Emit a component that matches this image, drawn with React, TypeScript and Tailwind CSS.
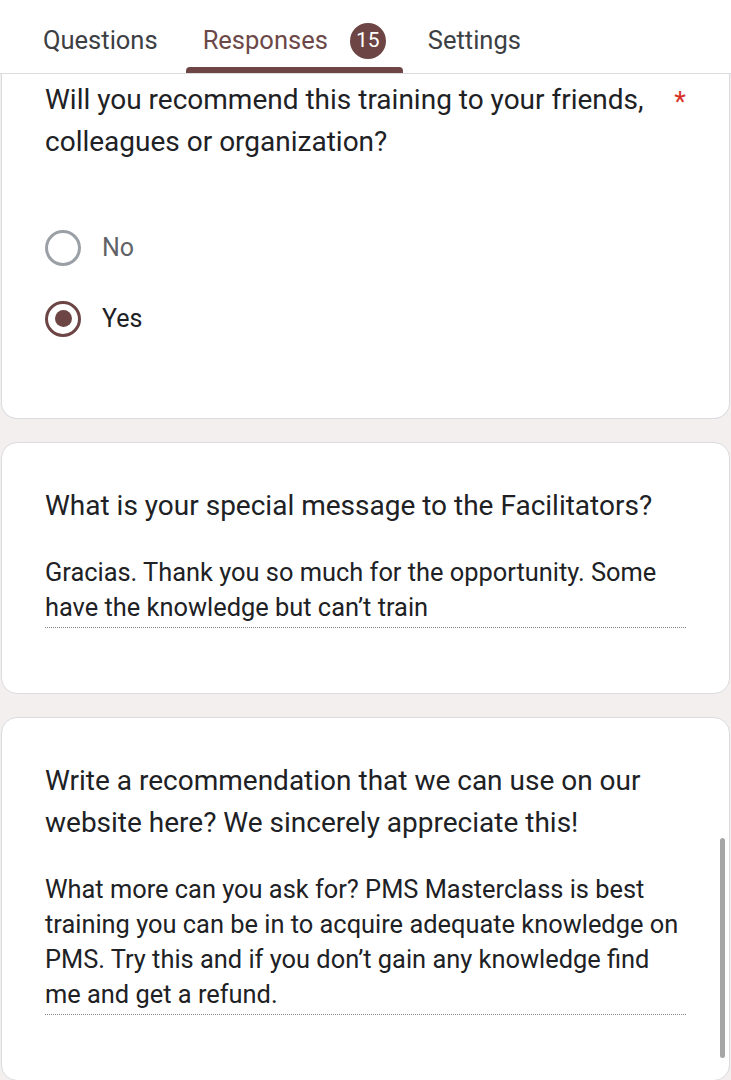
import { ReactNode } from 'react';

const font = { fontFamily: 'Roboto, "Noto Sans", sans-serif' };

function Radio({ checked, label }: { checked?: boolean; label: string }) {
  return (
    <div className="flex h-[71px] items-center gap-[21px]">
      <span
        className={`flex h-[36px] w-[36px] items-center justify-center rounded-full border-[3px] ${
          checked ? 'border-[#6d4545]' : 'border-[#9aa0a6]'
        }`}
      >
        {checked && <span className="h-[17px] w-[17px] rounded-full bg-[#6d4545]" />}
      </span>
      <span className={`text-[25px] ${checked ? 'text-[#202124]' : 'text-[#5f6368]'}`}>{label}</span>
    </div>
  );
}

function Card({ className, children }: { className?: string; children: ReactNode }) {
  return (
    <div
      className={`mx-[1px] rounded-[16px] border border-[#dadce0] bg-white pr-[43px] pl-[43px] ${className ?? ''}`}
    >
      {children}
    </div>
  );
}

function Answer({ children }: { children: ReactNode }) {
  return (
    <div className="mt-[28px]">
      <p className="text-[25.4px] leading-[35px] text-[#202124]">{children}</p>
      <div className="mt-[2px] border-b border-dotted border-[#80868b]" />
    </div>
  );
}

export default function App() {
  return (
    <div className="relative h-[1080px] w-[731px] overflow-hidden bg-[#f4efef]" style={font}>
      <div className="flex h-[74px] items-end border-b border-[#dadce0] bg-white pl-[25px] text-[25.5px]">
        <div className="flex h-full items-center pt-[8px] pr-[28px] pl-[18px] text-[#3c4043]">Questions</div>
        <div className="relative flex h-full items-center gap-[22px] px-[17px] pt-[8px] text-[#6d4848]">
          <span>Responses</span>
          <span className="flex h-[36px] w-[36px] items-center justify-center rounded-full bg-[#6d4545] text-[21px] text-white">
            15
          </span>
          <span className="absolute bottom-0 left-0 h-[6px] w-full rounded-t-[4px] bg-[#6d4545]" />
        </div>
        <div className="flex h-full items-center px-[25px] pt-[8px] text-[#3c4043]">Settings</div>
      </div>

      <Card className="rounded-t-none border-t-0 pt-[5px] pb-[64px]">
        <div className="flex">
          <p className="flex-1 text-[28px] leading-[42px] text-[#202124]">
            Will you recommend this training to your friends, colleagues or organization?
          </p>
          <span className="ml-[14px] pt-[2px] text-[27px] leading-[42px] text-[#d93025]">*</span>
        </div>
        <div className="mt-[49px]">
          <Radio label="No" />
          <Radio checked label="Yes" />
        </div>
      </Card>

      <Card className="mt-[23px] pt-[42px] pb-[65px]">
        <p className="text-[28px] leading-[42px] text-[#202124]">
          What is your special message to the Facilitators?
        </p>
        <Answer>
          Gracias. Thank you so much for the opportunity. Some have the knowledge but can’t train
        </Answer>
      </Card>

      <Card className="mt-[23px] pt-[42px] pb-[65px]">
        <p className="text-[28px] leading-[42px] text-[#202124]">
          Write a recommendation that we can use on our website here? We sincerely appreciate this!
        </p>
        <Answer>
          What more can you ask for? PMS Masterclass is best training you can be in to acquire adequate
          knowledge on PMS. Try this and if you don’t gain any knowledge find me and get a refund.
        </Answer>
      </Card>

      <div className="absolute top-[838px] left-[720px] h-[220px] w-[5px] rounded-full bg-[#a6a6a6]" />
    </div>
  );
}
